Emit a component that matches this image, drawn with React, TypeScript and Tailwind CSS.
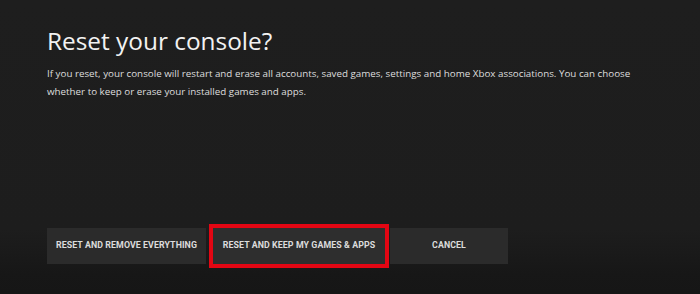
import React from "react";

const btnText =
  "text-[8.8px] font-bold uppercase tracking-[0.01em] text-[#dcdcdc] font-['Roboto',sans-serif]";

export default function App() {
  return (
    <div className="h-[294px] w-[700px] overflow-hidden bg-[linear-gradient(to_bottom,#1e1e1e_0%,#1d1d1d_78%,#1a1a1a_86%,#171717_93%,#161616_100%)] font-['Open_Sans',sans-serif]">
      <div className="flex h-full flex-col pl-[47px]">
        {/* Heading */}
        <h1 className="mt-[25px] text-[24.4px] leading-[32px] text-[#f2f2f2]">
          Reset your console?
        </h1>
        <p className="mt-[8px] w-[600px] text-[9.8px] leading-[18px] text-[#dedede]">
          If you reset, your console will restart and erase all accounts, saved
          games, settings and home Xbox associations. You can choose whether to
          keep or erase your installed games and apps.
        </p>

        {/* Actions */}
        <div className="mt-auto mb-[26px] flex items-center">
          <button className={`h-[36px] w-[159px] bg-[#2b2b2b] ${btnText}`}>
            Reset and remove everything
          </button>
          <div className="ml-[3px] flex h-[44px] w-[180px] border-4 border-[#e30613] bg-[#2e2e2e]">
            <button className={`h-full w-full ${btnText}`}>
              Reset and keep my games &amp; apps
            </button>
          </div>
          <button
            className={`ml-[1px] h-[36px] w-[118px] bg-[#2b2b2b] ${btnText}`}
          >
            Cancel
          </button>
        </div>
      </div>
    </div>
  );
}
